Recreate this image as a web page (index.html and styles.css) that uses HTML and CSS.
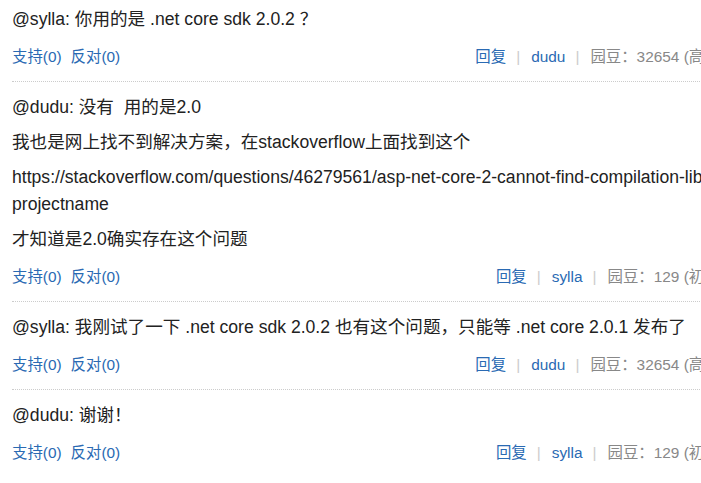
FILE: index.html
```
<!DOCTYPE html>
<html lang="zh-CN">
<head>
    <meta charset="UTF-8">
    <title>评论</title>
    <link rel="stylesheet" href="styles.css">
</head>
<body>
    <div class="comments">
        <div class="comment">
            <div class="comment-body">
                <p>@sylla: 你用的是 .net core sdk 2.0.2 ？</p>
            </div>
            <div class="comment-footer">
                <div class="votes"><a href="#">支持(0)</a><a href="#">反对(0)</a></div>
                <div class="meta"><a href="#">回复</a><span class="sep">|</span><a href="#">dudu</a><span class="sep">|</span><span class="bean">园豆：32654 (高人七级)</span><span class="sep">|</span><span class="date">2017-09-20 14:31</span></div>
            </div>
        </div>
        <div class="comment">
            <div class="comment-body">
                <p>@dudu: 没有&nbsp; 用的是2.0</p>
                <p>我也是网上找不到解决方案，在stackoverflow上面找到这个</p>
                <p>https://stackoverflow.com/questions/46279561/asp-net-core-2-cannot-find-compilation-library-location-for-package-projectname</p>
                <p>才知道是2.0确实存在这个问题</p>
            </div>
            <div class="comment-footer">
                <div class="votes"><a href="#">支持(0)</a><a href="#">反对(0)</a></div>
                <div class="meta"><a href="#">回复</a><span class="sep">|</span><a href="#">sylla</a><span class="sep">|</span><span class="bean">园豆：129 (初学一级)</span><span class="sep">|</span><span class="date">2017-09-20 14:37</span></div>
            </div>
        </div>
        <div class="comment">
            <div class="comment-body">
                <p>@sylla: 我刚试了一下 .net core sdk 2.0.2 也有这个问题，只能等 .net core 2.0.1 发布了</p>
            </div>
            <div class="comment-footer">
                <div class="votes"><a href="#">支持(0)</a><a href="#">反对(0)</a></div>
                <div class="meta"><a href="#">回复</a><span class="sep">|</span><a href="#">dudu</a><span class="sep">|</span><span class="bean">园豆：32654 (高人七级)</span><span class="sep">|</span><span class="date">2017-09-20 14:52</span></div>
            </div>
        </div>
        <div class="comment">
            <div class="comment-body">
                <p>@dudu: 谢谢！</p>
            </div>
            <div class="comment-footer">
                <div class="votes"><a href="#">支持(0)</a><a href="#">反对(0)</a></div>
                <div class="meta"><a href="#">回复</a><span class="sep">|</span><a href="#">sylla</a><span class="sep">|</span><span class="bean">园豆：129 (初学一级)</span><span class="sep">|</span><span class="date">2017-09-20 15:04</span></div>
            </div>
        </div>
    </div>
</body>
</html>
```

FILE: styles.css
```
body {
    margin: 0;
    padding: 0 0 0 12px;
    font-family: "Liberation Sans", Arial, "Noto Sans CJK SC", sans-serif;
    color: #222;
    text-spacing-trim: space-all;
    overflow: hidden;
}
.comments {
    width: 960px;
}
.comment {
    padding: 12px 0 14px 0;
    border-bottom: 1px dotted #ccc;
}
.comment:first-child {
    padding-top: 6px;
}
.comment:last-child {
    border-bottom: none;
}
.comment-body p {
    margin: 0 0 8px 0;
    font-size: 17.6px;
    line-height: 27px;
}
.comment-body p:last-child {
    margin-bottom: 0;
}
.comment-footer {
    display: flex;
    justify-content: space-between;
    margin-top: 14px;
    padding-right: 72px;
    font-size: 15.4px;
    line-height: 20px;
}
.comment-footer a {
    color: #2a6ab3;
    text-decoration: none;
}
.votes a {
    margin-right: 9px;
}
.sep {
    color: #ccc;
    margin: 0 10px 0 9px;
}
.meta a + .sep {
    margin: 0 11px 0 10px;
}
.bean, .date {
    color: #888;
}
```
